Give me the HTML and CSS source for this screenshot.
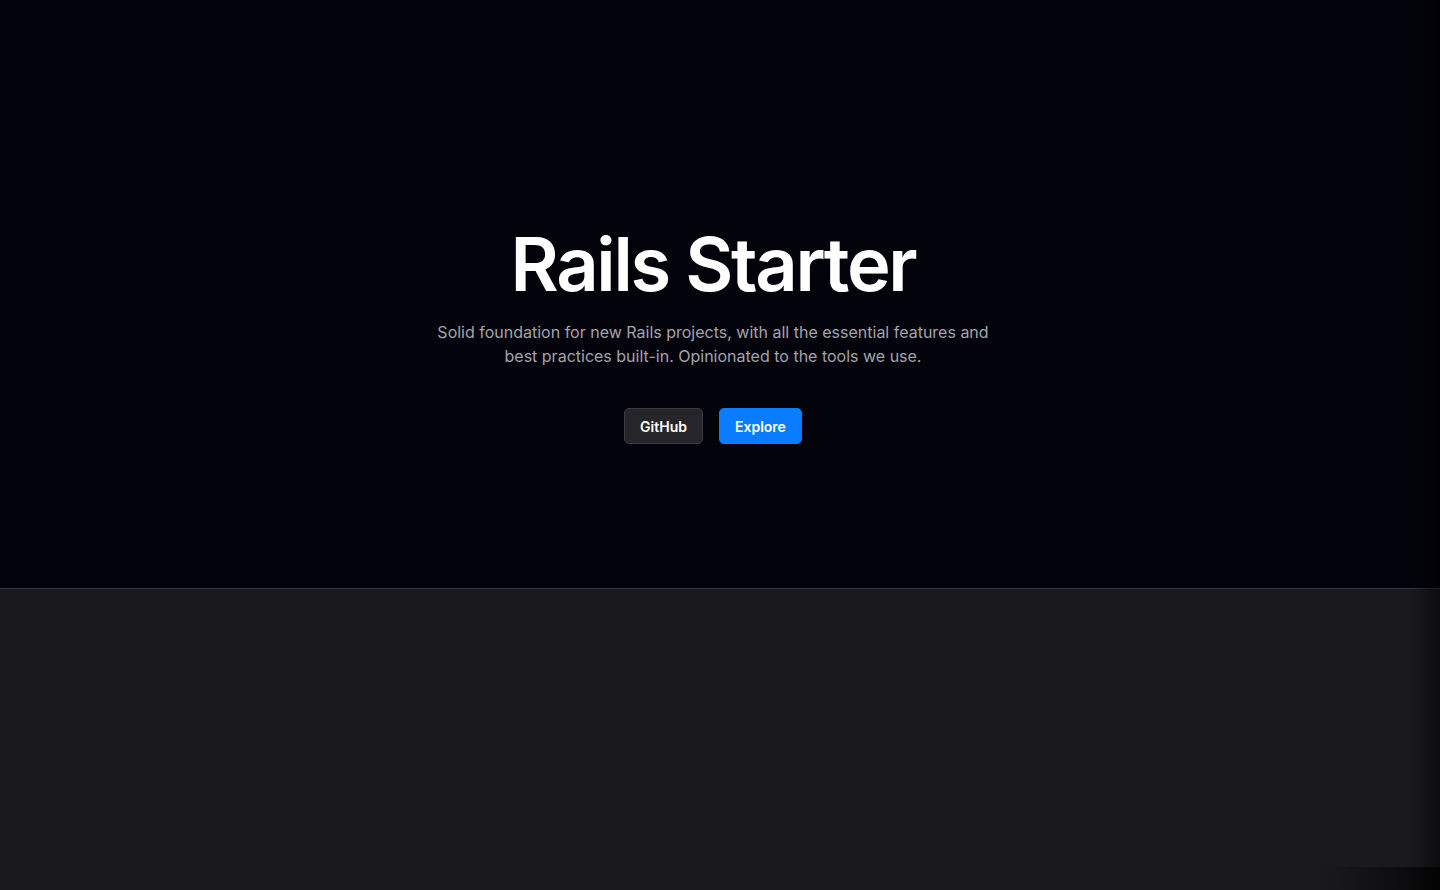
FILE: index.html
```html
<!DOCTYPE html>
<html lang="en">
<head>
<meta charset="utf-8">
<title>Rails Starter</title>
<link rel="stylesheet" href="styles.css">
</head>
<body>
<div class="viewport">
  <main class="page">
    <section class="hero">
      <h1 class="hero-title">Rails Starter</h1>
      <p class="hero-lead">Solid foundation for new Rails projects, with all the essential features and best practices built-in. Opinionated to the tools we use.</p>
      <div class="hero-actions">
        <a class="btn btn-dark" href="#">GitHub</a>
        <a class="btn btn-primary" href="#">Explore</a>
      </div>
    </section>
    <section class="below"></section>
  </main>
  <div class="edge-fade"></div>
  <div class="corner-fade"></div>
</div>
</body>
</html>
```
FILE: styles.css
```css
* { box-sizing: border-box; }
html, body { margin: 0; height: 100%; }
body {
  background: #1a1a1e;
  font-family: Inter, "Noto Sans", sans-serif;
  color: #fff;
  overflow: hidden;
}
.viewport {
  position: relative;
  height: 890px;
  display: flex;
  background: #1a1a1e;
}
.page {
  flex: 1;
  display: flex;
  flex-direction: column;
}
.hero {
  height: 589px;
  background: #03040b;
  border-bottom: 1px solid #35353b;
  display: flex;
  flex-direction: column;
  align-items: center;
  padding-top: 226px;
  padding-right: 14px;
}
.hero-title {
  margin: 0;
  font-size: 74px;
  line-height: 76px;
  font-weight: 600;
  letter-spacing: -2.3px;
  color: #fff;
}
.hero-lead {
  margin: 18px 0 0;
  max-width: 576px;
  text-align: center;
  font-size: 16px;
  line-height: 24px;
  color: #a3a3ab;
}
.hero-actions {
  margin-top: 40px;
  display: flex;
  gap: 16px;
}
.btn {
  display: inline-flex;
  align-items: center;
  justify-content: center;
  height: 36px;
  padding: 0 15px;
  border-radius: 5px;
  font-size: 14px;
  font-weight: 600;
  text-decoration: none;
  color: #fff;
}
.btn-dark {
  background: #26262a;
  border: 1px solid #3a3a40;
}
.btn-primary {
  background: #0a7cff;
  border: 1px solid #0a7cff;
}
.below {
  flex: 1;
  background: #1a1a1e;
}
.edge-fade {
  position: absolute;
  top: 0;
  right: 0;
  width: 32px;
  height: 100%;
  background: linear-gradient(to right, rgba(0,0,0,0), rgba(0,0,0,0.5));
  pointer-events: none;
}
.corner-fade {
  position: absolute;
  right: 0;
  bottom: 0;
  width: 120px;
  height: 23px;
  background: linear-gradient(to right, rgba(0,0,0,0), rgba(0,0,0,0.75));
  pointer-events: none;
}
```
